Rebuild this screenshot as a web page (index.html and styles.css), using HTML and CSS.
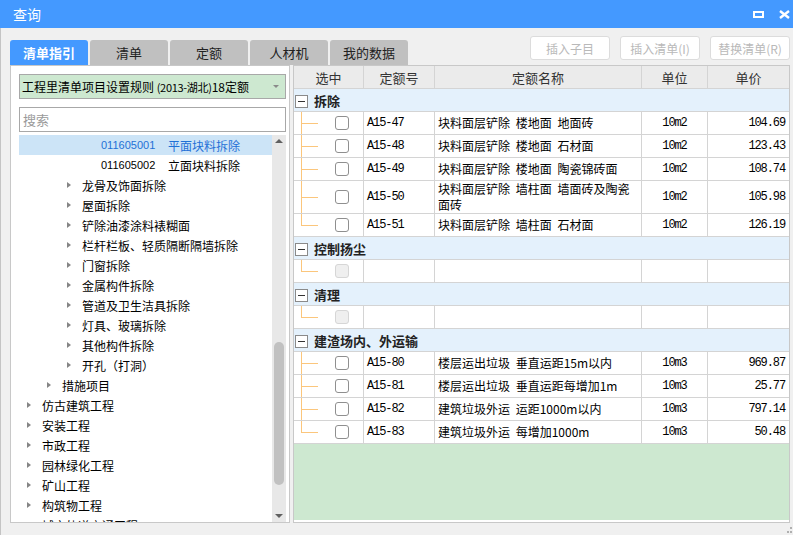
FILE: index.html
```html
<!DOCTYPE html>
<html lang="zh">
<head>
<meta charset="utf-8">
<title>查询</title>
<link rel="stylesheet" href="styles.css">
</head>
<body>
<div class="window">
  <div class="titlebar">
    <span class="title">查询</span>
    <div class="winbtns">
      <svg class="wicon" width="11" height="7" viewBox="0 0 11 7"><path d="M0 0h11v7H0zM2 2h7v3H2z" fill="#fff" fill-rule="evenodd"/></svg>
      <svg class="wicon" width="11" height="9" viewBox="0 0 11 9"><path d="M1 1l9 7M10 1L1 8" stroke="#fff" stroke-width="2.4"/></svg>
    </div>
  </div>
  <div class="frame">
    <div class="toolbar">
      <div class="tabs">
        <div class="tab active">清单指引</div>
        <div class="tab">清单</div>
        <div class="tab">定额</div>
        <div class="tab">人材机</div>
        <div class="tab">我的数据</div>
      </div>
      <div class="actions">
        <div class="btn">插入子目</div>
        <div class="btn">插入清单(I)</div>
        <div class="btn">替换清单(R)</div>
      </div>
    </div>
    <div class="main">
      <div class="left">
        <div class="combo">
          <span class="combo-text">工程里清单项目设置规则 <span class="small">(2013-湖北)</span>18定额</span>
          <span class="combo-arrow"></span>
        </div>
        <div class="search">搜索</div>
        <div class="tree">
          <div class="tree-list">
            <div class="row leaf selected"><span class="code">011605001</span>平面块料拆除</div>
            <div class="row leaf"><span class="code">011605002</span>立面块料拆除</div>
            <div class="row l3"><span class="arrow"></span>龙骨及饰面拆除</div>
            <div class="row l3"><span class="arrow"></span>屋面拆除</div>
            <div class="row l3"><span class="arrow"></span>铲除油漆涂料裱糊面</div>
            <div class="row l3"><span class="arrow"></span>栏杆栏板、轻质隔断隔墙拆除</div>
            <div class="row l3"><span class="arrow"></span>门窗拆除</div>
            <div class="row l3"><span class="arrow"></span>金属构件拆除</div>
            <div class="row l3"><span class="arrow"></span>管道及卫生洁具拆除</div>
            <div class="row l3"><span class="arrow"></span>灯具、玻璃拆除</div>
            <div class="row l3"><span class="arrow"></span>其他构件拆除</div>
            <div class="row l3"><span class="arrow"></span>开孔（打洞）</div>
            <div class="row l2"><span class="arrow"></span>措施项目</div>
            <div class="row l1"><span class="arrow"></span>仿古建筑工程</div>
            <div class="row l1"><span class="arrow"></span>安装工程</div>
            <div class="row l1"><span class="arrow"></span>市政工程</div>
            <div class="row l1"><span class="arrow"></span>园林绿化工程</div>
            <div class="row l1"><span class="arrow"></span>矿山工程</div>
            <div class="row l1"><span class="arrow"></span>构筑物工程</div>
            <div class="row l1"><span class="arrow"></span>城市轨道交通工程</div>
          </div>
          <div class="scrollbar">
            <div class="sb-up"></div>
            <div class="sb-track"><div class="sb-thumb"></div></div>
            <div class="sb-down"></div>
          </div>
        </div>
      </div>
      <div class="right">
        <table class="grid">
          <colgroup>
            <col class="c-sel"><col class="c-code"><col class="c-name"><col class="c-unit"><col class="c-price">
          </colgroup>
          <thead>
            <tr><th>选中</th><th>定额号</th><th>定额名称</th><th>单位</th><th>单价</th></tr>
          </thead>
          <tbody>
            <tr class="group"><td colspan="5"><span class="minus"></span>拆除</td></tr>
            <tr><td class="sel"><span class="check"></span></td><td class="code">A15-47</td><td class="name">块料面层铲除 楼地面 地面砖</td><td class="unit">10m2</td><td class="price">104.69</td></tr>
            <tr><td class="sel"><span class="check"></span></td><td class="code">A15-48</td><td class="name">块料面层铲除 楼地面 石材面</td><td class="unit">10m2</td><td class="price">123.43</td></tr>
            <tr><td class="sel"><span class="check"></span></td><td class="code">A15-49</td><td class="name">块料面层铲除 楼地面 陶瓷锦砖面</td><td class="unit">10m2</td><td class="price">108.74</td></tr>
            <tr class="tall"><td class="sel"><span class="check"></span></td><td class="code">A15-50</td><td class="name">块料面层铲除 墙柱面 墙面砖及陶瓷<br>面砖</td><td class="unit">10m2</td><td class="price">105.98</td></tr>
            <tr><td class="sel last"><span class="check"></span></td><td class="code">A15-51</td><td class="name">块料面层铲除 墙柱面 石材面</td><td class="unit">10m2</td><td class="price">126.19</td></tr>
            <tr class="group"><td colspan="5"><span class="minus"></span>控制扬尘</td></tr>
            <tr><td class="sel last"><span class="check off"></span></td><td class="code"></td><td class="name"></td><td class="unit"></td><td class="price"></td></tr>
            <tr class="group"><td colspan="5"><span class="minus"></span>清理</td></tr>
            <tr><td class="sel last"><span class="check off"></span></td><td class="code"></td><td class="name"></td><td class="unit"></td><td class="price"></td></tr>
            <tr class="group"><td colspan="5"><span class="minus"></span>建渣场内、外运输</td></tr>
            <tr><td class="sel"><span class="check"></span></td><td class="code">A15-80</td><td class="name">楼层运出垃圾 垂直运距15m以内</td><td class="unit">10m3</td><td class="price">969.87</td></tr>
            <tr><td class="sel"><span class="check"></span></td><td class="code">A15-81</td><td class="name">楼层运出垃圾 垂直运距每增加1m</td><td class="unit">10m3</td><td class="price">25.77</td></tr>
            <tr><td class="sel"><span class="check"></span></td><td class="code">A15-82</td><td class="name">建筑垃圾外运 运距1000m以内</td><td class="unit">10m3</td><td class="price">797.14</td></tr>
            <tr><td class="sel last"><span class="check"></span></td><td class="code">A15-83</td><td class="name">建筑垃圾外运 每增加1000m</td><td class="unit">10m3</td><td class="price">50.48</td></tr>
          </tbody>
        </table>
        <div class="fill"></div>
      </div>
    </div>
  </div>
  <svg class="grip" width="5" height="6" viewBox="0 0 5 6"><path d="M3 0h2v2H3zM0 4h2v2H0zM3 4h2v2H3z" fill="#b0b0b0"/></svg>
</div>
</body>
</html>
```

FILE: styles.css
```css
* { box-sizing: border-box; }

body {
  margin: 0;
  width: 793px;
  height: 535px;
  overflow: hidden;
  background: #f0f0f0;
  font-family: "Noto Sans CJK SC", "Noto Sans", sans-serif;
  color: #000;
}

.window {
  position: relative;
  height: 535px;
  display: flex;
  flex-direction: column;
}

.titlebar {
  height: 28px;
  flex: none;
  background: #4499ff;
  color: #fff;
  display: flex;
  align-items: center;
  padding: 0 3px 0 13px;
  font-size: 14px;
}
.title { flex: 1; }
.winbtns { display: flex; align-items: center; gap: 15px; }
.wicon { display: block; }

.frame {
  flex: 1;
  border-left: 1px solid #c4c4c4;
  padding-left: 9px;
  display: flex;
  flex-direction: column;
}

.toolbar {
  height: 37px;
  flex: none;
  display: flex;
  align-items: flex-end;
}
.tabs { display: flex; gap: 2px; }
.tab {
  width: 78px;
  height: 25px;
  background: #c0c0c0;
  border-radius: 3px 3px 0 0;
  display: flex;
  align-items: center;
  justify-content: center;
  font-size: 13px;
  color: #222;
}
.tab.active { background: #4499ff; color: #fff; font-weight: bold; }

.actions {
  margin-left: auto;
  margin-right: 3px;
  align-self: flex-start;
  margin-top: 8px;
  display: flex;
  gap: 10px;
}
.btn {
  width: 80px;
  height: 24px;
  border: 1px solid #dcdcdc;
  border-radius: 3px;
  background: #fff;
  color: #b9b9b9;
  font-size: 12px;
  display: flex;
  align-items: center;
  justify-content: center;
}

.main {
  height: 458px;
  flex: none;
  display: flex;
  gap: 3px;
}

/* left panel */
.left {
  width: 280px;
  flex: none;
  border: 1px solid #c8c8c8;
  background: #fff;
  padding: 8px 3px 0 8px;
  display: flex;
  flex-direction: column;
}
.combo {
  height: 25px;
  flex: none;
  border: 1px solid #a8a8a8;
  background: #cde8d0;
  display: flex;
  align-items: center;
  padding: 0 6px 0 2px;
  font-size: 12px;
  white-space: nowrap;
}
.combo-text { flex: 1; overflow: hidden; }
.small { font-size: 11px; letter-spacing: -0.3px; }
.combo-arrow {
  width: 0; height: 0;
  border-left: 3px solid transparent;
  border-right: 3px solid transparent;
  border-top: 3px solid #8a8a8a;
}
.search {
  margin-top: 8px;
  height: 25px;
  flex: none;
  border: 1px solid #a8a8a8;
  font-size: 13px;
  color: #9a9a9a;
  padding-left: 3px;
  display: flex;
  align-items: center;
}
.tree {
  margin-top: 3px;
  flex: 1;
  display: flex;
  overflow: hidden;
}
.tree-list { flex: 1; overflow: hidden; }
.row {
  height: 20px;
  display: flex;
  align-items: center;
  font-size: 12px;
  white-space: nowrap;
}
.row.selected { background: #cce4f7; color: #1f70d6; }
.leaf { padding-left: 82px; }
.code { width: 67px; font-family: "Liberation Sans", sans-serif; font-size: 11px; }
.l1 { padding-left: 8px; }
.l2 { padding-left: 28px; }
.l3 { padding-left: 48px; }
.arrow {
  width: 0; height: 0;
  border-top: 3.5px solid transparent;
  border-bottom: 3.5px solid transparent;
  border-left: 4px solid #858585;
  margin-right: 11px;
}

.scrollbar {
  width: 14px;
  flex: none;
  background: #e8e8e8;
  display: flex;
  flex-direction: column;
  align-items: center;
}
.sb-up, .sb-down { height: 12px; flex: none; display: flex; align-items: center; justify-content: center; }
.sb-up::before {
  content: "";
  border-left: 4px solid transparent;
  border-right: 4px solid transparent;
  border-bottom: 4px solid #606060;
}
.sb-down::before {
  content: "";
  border-left: 4px solid transparent;
  border-right: 4px solid transparent;
  border-top: 4px solid #606060;
}
.sb-track { flex: 1; width: 100%; display: flex; justify-content: center; }
.sb-thumb {
  margin-top: 195px;
  width: 10px;
  height: 143px;
  border-radius: 5px;
  background: #c1c1c1;
}

/* right grid */
.right {
  flex: 1;
  margin-right: 3px;
  border: 1px solid #c8c8c8;
  background: #fff;
  display: flex;
  flex-direction: column;
  padding-bottom: 2px;
}
.grid {
  width: 100%;
  table-layout: fixed;
  border-collapse: separate;
  border-spacing: 0;
  font-size: 12px;
  flex: none;
}
.c-sel { width: 70px; }
.c-code { width: 71px; }
.c-name { width: 207px; }
.c-unit { width: 66px; }
.grid tr { height: 23px; }
.grid tr.tall { height: 33px; }
.grid th, .grid td {
  border-right: 1px solid #d4d4d4;
  border-bottom: 1px solid #d4d4d4;
  padding: 0 3px;
  white-space: nowrap;
  overflow: hidden;
}
.grid th:last-child, .grid td:last-child { border-right: none; }
.grid th {
  background: #ebebeb;
  font-weight: normal;
  font-size: 13px;
  color: #333;
}
.group td {
  background: #e4f1fc;
  font-weight: bold;
  font-size: 13px;
  color: #222;
  padding-left: 1px;
}
.minus {
  display: inline-block;
  vertical-align: -2px;
  width: 13px;
  height: 13px;
  border: 1px solid #8a8a8a;
  background: #fff;
  margin-right: 6px;
  position: relative;
}
.minus::after {
  content: "";
  position: absolute;
  left: 2px; right: 2px; top: 5px;
  height: 1px;
  background: #333;
}
.sel { position: relative; padding-left: 41px !important; }
.sel::before {
  content: "";
  position: absolute;
  left: 7px; top: 0; bottom: 0;
  width: 1px;
  background: #fbc67c;
}
.sel.last::before { bottom: 50%; }
.sel::after {
  content: "";
  position: absolute;
  left: 7px; top: 50%;
  width: 17px; height: 1px;
  background: #fbc67c;
}
.check {
  display: block;
  width: 14px;
  height: 14px;
  border: 1px solid #8f8f8f;
  border-radius: 3px;
  background: #fff;
}
.check.off { background: #efefef; border-color: #d6d6d6; }
td.code, td.unit, td.price {
  font-family: "Liberation Mono", monospace;
  font-size: 12px;
  letter-spacing: -1.1px;
}
td.name { word-spacing: 3px; line-height: 16px; }
td.unit { text-align: center; }
td.price { text-align: right; padding-right: 4px; }
.fill { flex: 1; background: #cde8d0; }

.grip { position: absolute; right: 1px; bottom: 2px; }
```
